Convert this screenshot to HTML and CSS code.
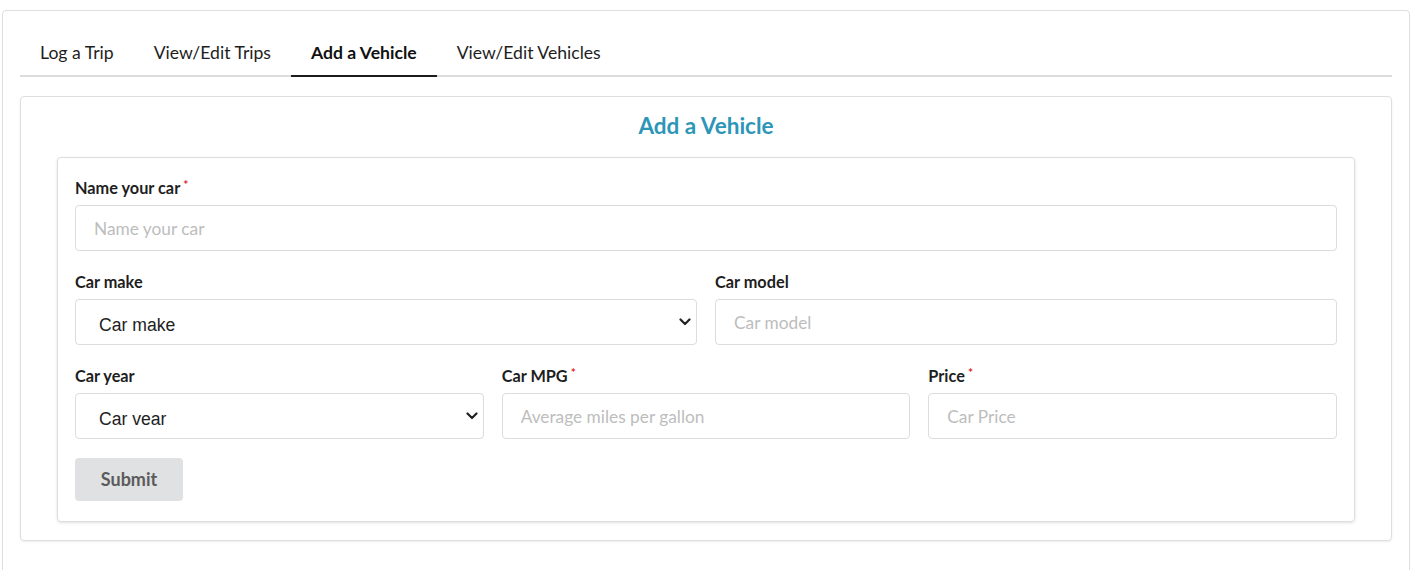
FILE: index.html
```html
<!DOCTYPE html>
<html lang="en">
<head>
<meta charset="utf-8">
<title>Add a Vehicle</title>
<link rel="stylesheet" href="styles.css">
</head>
<body>
<div class="page">
  <nav class="tabs">
    <a class="tab">Log a Trip</a>
    <a class="tab">View/Edit Trips</a>
    <a class="tab active">Add a Vehicle</a>
    <a class="tab">View/Edit Vehicles</a>
  </nav>
  <section class="panel">
    <h2 class="panel-title">Add a Vehicle</h2>
    <form class="form-card">
      <div class="field">
        <label class="label required">Name your car</label>
        <input class="input" type="text" placeholder="Name your car">
      </div>
      <div class="row two">
        <div class="field">
          <label class="label">Car make</label>
          <div class="select-wrap">
            <select class="select"><option>Car make</option></select>
            <svg class="chevron" width="12" height="8" viewBox="0 0 12 8"><polyline points="1.5,1.5 6,6 10.5,1.5" fill="none" stroke="#222" stroke-width="2.2" stroke-linecap="round" stroke-linejoin="round"/></svg>
          </div>
        </div>
        <div class="field">
          <label class="label">Car model</label>
          <input class="input" type="text" placeholder="Car model">
        </div>
      </div>
      <div class="row three">
        <div class="field">
          <label class="label">Car year</label>
          <div class="select-wrap">
            <select class="select"><option>Car vear</option></select>
            <svg class="chevron" width="12" height="8" viewBox="0 0 12 8"><polyline points="1.5,1.5 6,6 10.5,1.5" fill="none" stroke="#222" stroke-width="2.2" stroke-linecap="round" stroke-linejoin="round"/></svg>
          </div>
        </div>
        <div class="field">
          <label class="label required">Car MPG</label>
          <input class="input" type="text" placeholder="Average miles per gallon">
        </div>
        <div class="field">
          <label class="label required">Price</label>
          <input class="input" type="text" placeholder="Car Price">
        </div>
      </div>
      <button class="submit" type="button">Submit</button>
    </form>
  </section>
</div>
</body>
</html>
```
FILE: styles.css
```css
html, body {
  margin: 0;
  padding: 0;
  background: #ffffff;
  overflow: hidden;
}
body {
  font-family: Lato, "Open Sans", "Liberation Sans", sans-serif;
  color: #212121;
}
.page {
  margin: 10px 2px 0 2px;
  border: 1px solid #dedede;
  border-radius: 4px;
  padding: 21px 17px 40px 17px;
  min-height: 560px;
  box-sizing: border-box;
}
.tabs {
  display: flex;
  border-bottom: 2px solid #dcdcdc;
}
.tab {
  font-size: 17.6px;
  line-height: 20px;
  padding: 11px 20px 12px 20px;
  color: #1e1e1e;
  margin-bottom: -2px;
  border-bottom: 2px solid transparent;
}
.tab.active {
  font-weight: 700;
  color: #111;
  border-bottom-color: #1b1c1d;
}
.panel {
  margin-top: 19px;
  border: 1px solid #dedede;
  border-radius: 4px;
  box-shadow: 0 1px 2px rgba(0,0,0,0.08);
  padding: 14px 36px 18px 36px;
}
.panel-title {
  margin: 0 0 16px 0;
  text-align: center;
  font-size: 22.5px;
  line-height: 30px;
  font-weight: 700;
  color: #2d96b8;
}
.form-card {
  border: 1px solid #dedede;
  border-radius: 4px;
  box-shadow: 0 1px 3px rgba(0,0,0,0.12);
  padding: 21px 17px 20px 17px;
  display: flex;
  flex-direction: column;
  gap: 22px;
}
.row {
  display: grid;
  gap: 18px;
}
.row.two { grid-template-columns: 1fr 1fr; }
.row.three { grid-template-columns: 1fr 1fr 1fr; }
.field {
  display: flex;
  flex-direction: column;
  gap: 8px;
}
.label {
  font-size: 16.3px;
  line-height: 18px;
  font-weight: 700;
  color: #1e1e1e;
}
.label.required::after {
  content: "*";
  color: #db2828;
  font-size: 12px;
  vertical-align: top;
  margin-left: 3px;
  position: relative;
  top: -3px;
}
.input, .select {
  box-sizing: border-box;
  height: 46px;
  border: 1px solid #dcdcdc;
  border-radius: 4px;
  background: #fff;
  outline: none;
  width: 100%;
}
.input {
  font-family: Lato, "Open Sans", "Liberation Sans", sans-serif;
  font-size: 17.3px;
  padding: 0 18px;
  color: #222;
}
.input::placeholder {
  color: #bdbdbd;
}
.select-wrap {
  position: relative;
}
.select {
  display: block;
  appearance: none;
  -webkit-appearance: none;
  font-family: "Liberation Sans", Arial, sans-serif;
  font-size: 17.6px;
  padding: 6px 30px 0 23px;
  color: #222;
}
.chevron {
  position: absolute;
  right: 6px;
  top: 19px;
  pointer-events: none;
}
.submit {
  align-self: flex-start;
  margin-top: -3px;
  width: 108px;
  height: 43px;
  padding: 0 0 2px 0;
  border: none;
  border-radius: 4px;
  background: #e0e1e2;
  color: #5b5b5b;
  font-family: Lato, "Open Sans", "Liberation Sans", sans-serif;
  font-size: 18px;
  font-weight: 700;
}
```
